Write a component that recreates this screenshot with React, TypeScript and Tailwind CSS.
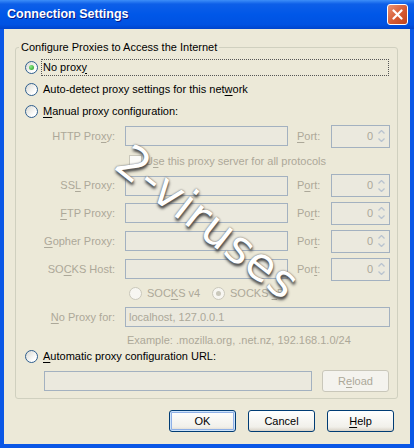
import clsx from "clsx";
import type { ReactNode } from "react";

const disabledText = "text-[#aca899]";

function U({ children }: { children: ReactNode }) {
  return <span className="underline decoration-1 underline-offset-[2px]">{children}</span>;
}

function Radio({ checked, disabled }: { checked?: boolean; disabled?: boolean }) {
  return (
    <span
      className={clsx(
        "flex h-[13px] w-[13px] shrink-0 items-center justify-center rounded-full border",
        disabled
          ? "border-[#cac8bb] bg-[#f7f6f1]"
          : "border-[#2f5f8f] bg-[linear-gradient(135deg,#d9d9d2,#ffffff_75%)]"
      )}
    >
      {checked && (
        <span
          className={clsx(
            "h-[5px] w-[5px] rounded-full",
            disabled ? "bg-[#cac8bb]" : "bg-[radial-gradient(circle_at_35%_35%,#8be887,#1f9a1d)]"
          )}
        />
      )}
    </span>
  );
}

function TextBox({ className, value }: { className: string; value?: string }) {
  return (
    <div
      className={clsx(
        "h-[20px] shrink-0 border border-[#a3b1c0] bg-[#ebe9de] px-[3px] leading-[18px]",
        disabledText,
        className
      )}
    >
      {value}
    </div>
  );
}

function Chevron({ up }: { up?: boolean }) {
  return (
    <svg width="7" height="4" viewBox="0 0 7 4" className="block">
      <path
        d={up ? "M0.5 3.5 L3.5 0.5 L6.5 3.5" : "M0.5 0.5 L3.5 3.5 L6.5 0.5"}
        fill="none"
        stroke="#b9c3cf"
        strokeWidth="1.3"
      />
    </svg>
  );
}

function PortBox() {
  return (
    <div className="flex h-[23px] w-[59px] shrink-0 border border-[#a3b1c0] bg-[#ebe9de]">
      <span className={clsx("flex-1 pr-[1px] text-right leading-[21px]", disabledText)}>0</span>
      <span className="flex w-[15px] flex-col items-center justify-center gap-[4px]">
        <Chevron up />
        <Chevron />
      </span>
    </div>
  );
}

const proxyRows: { label: ReactNode; port: ReactNode; h: string }[] = [
  { label: <>SS<U>L</U> Proxy:</>, port: <>P<U>o</U>rt:</>, h: "h-[27px]" },
  { label: <><U>F</U>TP Proxy:</>, port: <>Po<U>r</U>t:</>, h: "h-[28px]" },
  { label: <><U>G</U>opher Proxy:</>, port: <>Por<U>t</U>:</>, h: "h-[28px]" },
  { label: <>SO<U>C</U>KS Host:</>, port: <>Por<U>t</U>:</>, h: "h-[28px]" },
];

function ProxyRow({ label, port, h }: { label: ReactNode; port: ReactNode; h: string }) {
  return (
    <div className={clsx("flex items-center", h)}>
      <span className={clsx("w-[99px] text-right", disabledText)}>{label}</span>
      <TextBox className="ml-[10px] w-[163px]" />
      <span className={clsx("ml-[9px] w-[34px]", disabledText)}>{port}</span>
      <PortBox />
    </div>
  );
}

function Button({ children, primary, disabled, className }: { children: ReactNode; primary?: boolean; disabled?: boolean; className?: string }) {
  return (
    <div
      className={clsx(
        "flex h-[22px] w-[67px] shrink-0 items-center justify-center rounded-[3px] border",
        disabled
          ? "border-[#c9c7ba] bg-[#f4f3ee] text-[#aca899]"
          : "border-[#003c74] bg-[linear-gradient(to_bottom,#ffffff,#f1f0ea_80%,#d8d2c6)]",
        primary && "shadow-[inset_0_0_0_1px_#cde3fa,inset_0_0_0_2px_#8fb0e6]",
        className
      )}
    >
      {children}
    </div>
  );
}

export default function App() {
  return (
    <div className="relative flex h-[448px] w-[414px] select-none flex-col overflow-hidden font-['Liberation_Sans',Arial,sans-serif] text-[11px] leading-[13px] text-black">
      {/* Title bar */}
      <div className="flex h-[29px] shrink-0 items-center bg-[linear-gradient(to_bottom,#3d8ef8_0%,#0d5fe8_14%,#0057e8_50%,#0052e2_85%,#0044cc_100%)] pl-[7px] pr-[6px]">
        <span className="text-[12.5px] font-bold text-white [text-shadow:1px_1px_0_#0a1883]">Connection Settings</span>
        <div className="ml-auto flex h-[21px] w-[21px] items-center justify-center rounded-[3px] border border-white bg-[linear-gradient(135deg,#eb9272,#d55a33_55%,#c0441d)]">
          <svg width="11" height="11" viewBox="0 0 11 11">
            <path d="M1.5 1.5 L9.5 9.5 M9.5 1.5 L1.5 9.5" stroke="white" strokeWidth="2.2" strokeLinecap="round" />
          </svg>
        </div>
      </div>

      {/* Body */}
      <div className="flex flex-1 flex-col border-x-4 border-b-4 border-[#0a57e6] bg-[#ece9d8]">
        <fieldset className="ml-[11px] mr-[12px] mt-[11px] rounded-[3px] border border-[#d0d0bf] pb-[7px] pt-[2px]">
          <legend className="ml-[3px] px-[2px] leading-[14px]">Configure Proxies to Access the Internet</legend>

          <div className="flex h-[22px] items-center pl-[9px] pr-[8px]">
            <Radio checked />
            <span className="ml-[3px] flex-1 border border-dotted border-[#555] py-[1px] pl-[1px]">
              No prox<U>y</U>
            </span>
          </div>
          <div className="flex h-[22px] items-center pl-[9px]">
            <Radio />
            <span className="ml-[5px]">Auto-detect proxy settings for this net<U>w</U>ork</span>
          </div>
          <div className="flex h-[22px] items-center pl-[9px]">
            <Radio />
            <span className="ml-[5px]"><U>M</U>anual proxy configuration:</span>
          </div>

          <ProxyRow label={<>HTTP Pro<U>x</U>y:</>} port={<><U>P</U>ort:</>} h="h-[28px]" />

          <div className="flex h-[22px] items-center pl-[113px]">
            <span className="h-[13px] w-[13px] border border-[#cac8bb] bg-[#fbfbf8]" />
            <span className={clsx("ml-[3px]", disabledText)}>U<U>s</U>e this proxy server for all protocols</span>
          </div>

          {proxyRows.map((r, i) => (
            <ProxyRow key={i} {...r} />
          ))}

          <div className="flex h-[20px] items-center pl-[113px]">
            <div className="flex w-[83px] items-center">
              <Radio disabled />
              <span className={clsx("ml-[5px]", disabledText)}>SOC<U>K</U>S v4</span>
            </div>
            <Radio checked disabled />
            <span className={clsx("ml-[5px]", disabledText)}>SOCKS <U>v</U>5</span>
          </div>

          <div className="flex h-[28px] items-center">
            <span className={clsx("w-[99px] text-right", disabledText)}><U>N</U>o Proxy for:</span>
            <TextBox className="ml-[10px] w-[265px]" value="localhost, 127.0.0.1" />
          </div>

          <div className={clsx("flex h-[18px] items-center pl-[111px]", disabledText)}>
            Example: .mozilla.org, .net.nz, 192.168.1.0/24
          </div>

          <div className="flex h-[14px] items-center pl-[9px]">
            <Radio />
            <span className="ml-[5px]"><U>A</U>utomatic proxy configuration URL:</span>
          </div>

          <div className="mt-[8px] flex h-[20px] items-center pl-[28px]">
            <TextBox className="w-[268px]" />
            <Button disabled className="ml-[10px]">R<U>e</U>load</Button>
          </div>
        </fieldset>

        <div className="mt-[11px] flex justify-end gap-[12px] pr-[16px]">
          <Button primary>OK</Button>
          <Button>Cancel</Button>
          <Button><U>H</U>elp</Button>
        </div>
      </div>

      {/* watermark */}
      <div className="pointer-events-none absolute left-[208px] top-[222px] -translate-x-1/2 -translate-y-1/2 rotate-[38deg] whitespace-nowrap font-['DejaVu_Sans',sans-serif] text-[46px] leading-none tracking-[1px] text-white [text-shadow:0_0_2px_#555,2px_2px_3px_#444]">
        2-viruses
      </div>
    </div>
  );
}
